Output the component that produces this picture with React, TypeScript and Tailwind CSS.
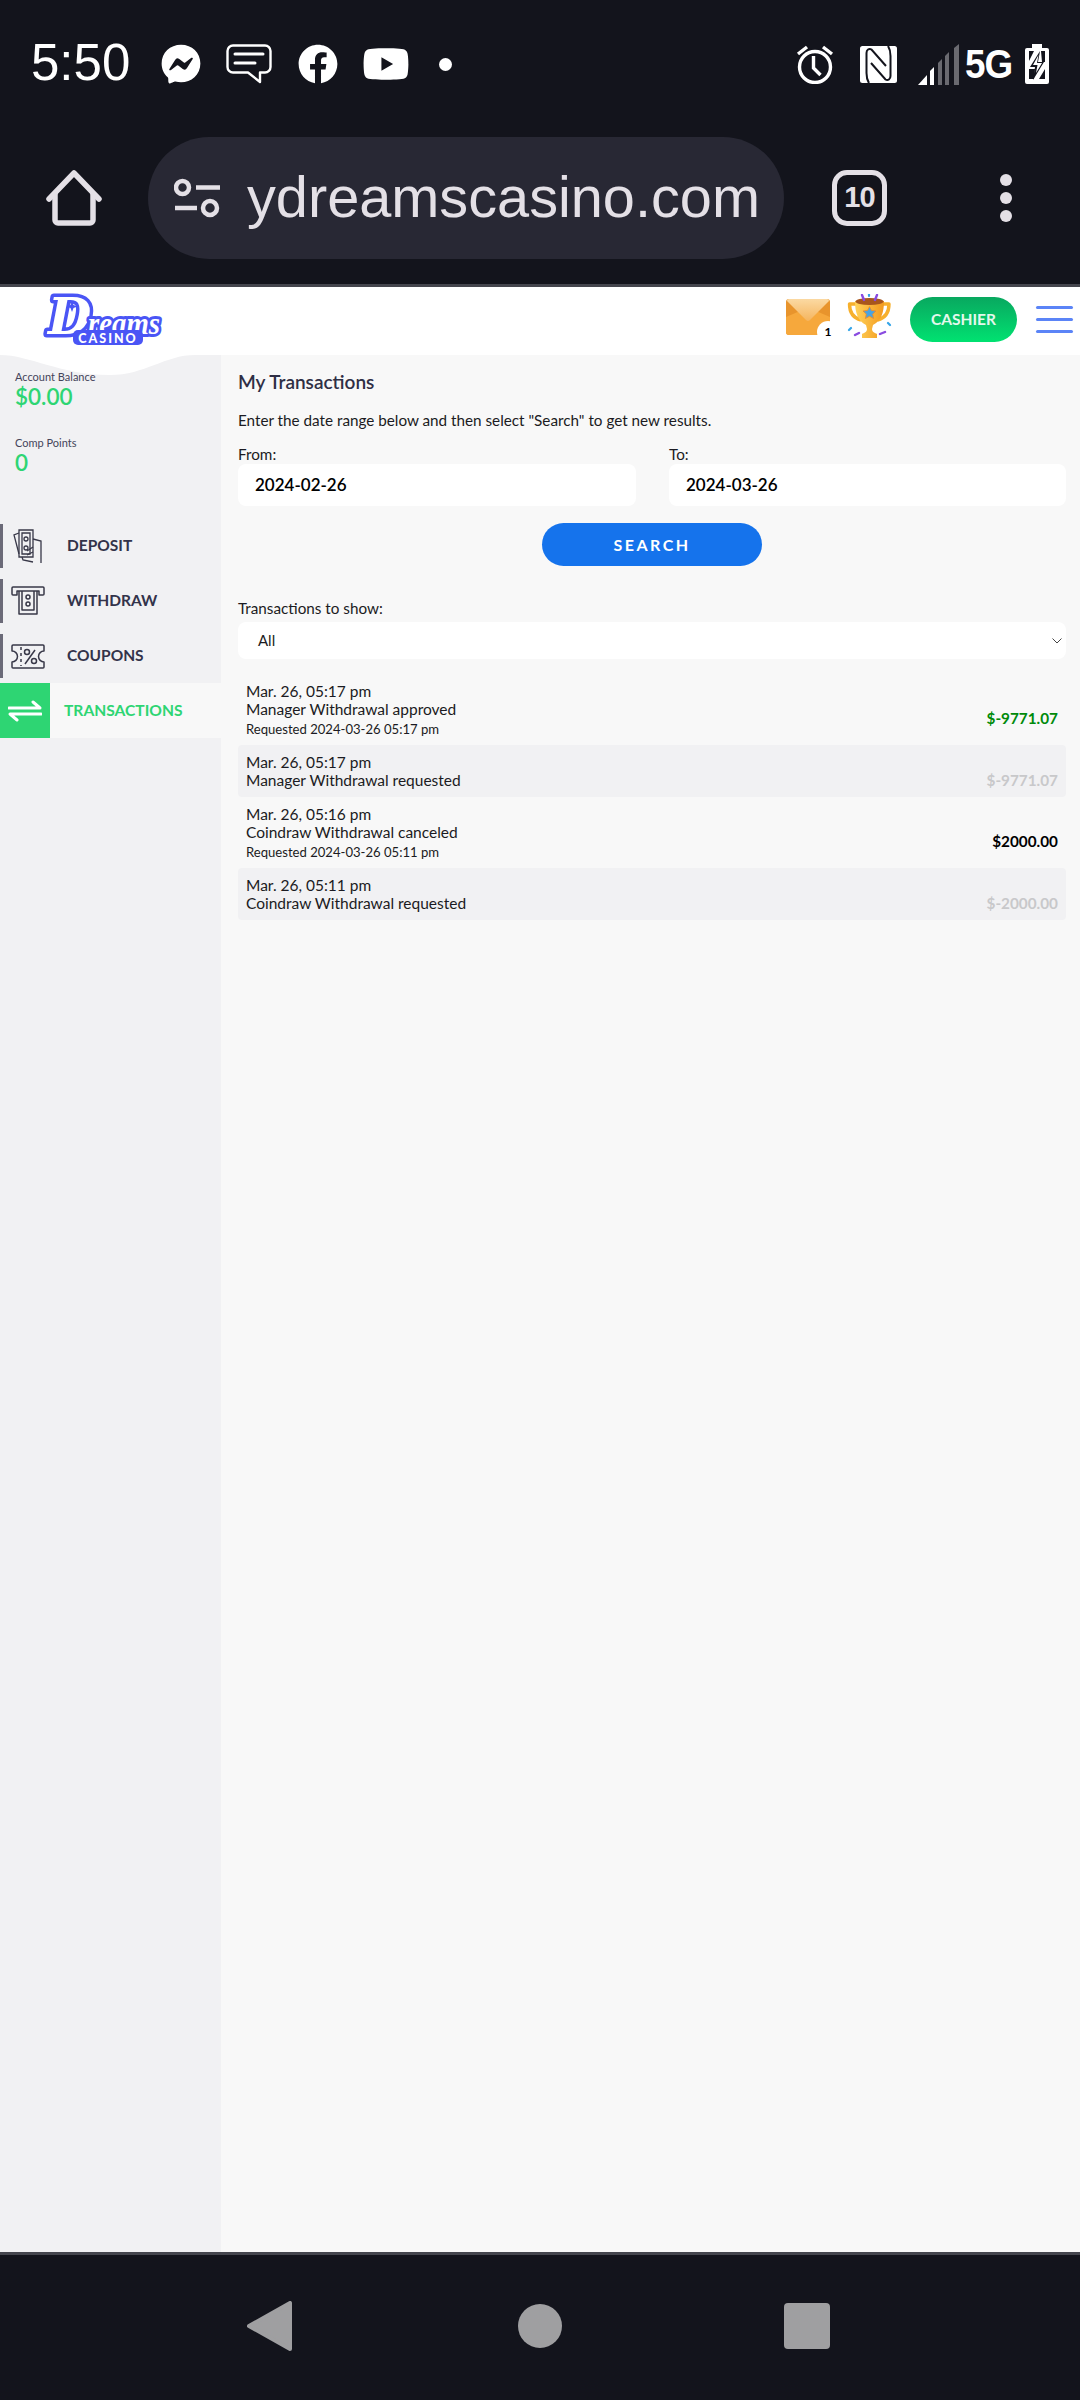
import { FaFacebook, FaFacebookMessenger, FaYoutube } from "react-icons/fa";

const rows = [
  { date: "Mar. 26, 05:17 pm", title: "Manager Withdrawal approved", note: "Requested 2024-03-26 05:17 pm", amount: "$-9771.07", color: "text-[#008a0a]", alt: false },
  { date: "Mar. 26, 05:17 pm", title: "Manager Withdrawal requested", amount: "$-9771.07", color: "text-[#c8c8ca]", alt: true },
  { date: "Mar. 26, 05:16 pm", title: "Coindraw Withdrawal canceled", note: "Requested 2024-03-26 05:11 pm", amount: "$2000.00", color: "text-black", alt: false },
  { date: "Mar. 26, 05:11 pm", title: "Coindraw Withdrawal requested", amount: "$-2000.00", color: "text-[#c8c8ca]", alt: true },
];

function ChatIcon() {
  return (
    <svg width="46" height="40" viewBox="0 0 46 40" fill="none" stroke="white" strokeWidth="2.4" strokeLinejoin="round" strokeLinecap="round">
      <path d="M7 1.500h32a5.500 5.500 0 0 1 5.500 5.500v16a5.500 5.500 0 0 1-5.500 5.500h-5v9.500l-12-9.500H7A5.500 5.500 0 0 1 1.500 23V7A5.500 5.500 0 0 1 7 1.500z" />
      <path d="M9 10h28M9 19h20" strokeWidth="3" />
    </svg>
  );
}

function AlarmIcon() {
  return (
    <svg width="38" height="40" viewBox="0 0 38 40" fill="none" stroke="white" strokeWidth="3.400">
      <circle cx="19" cy="23" r="15.500" />
      <path d="M17.500 12v12l7 7" />
      <path d="M2 10l9-7M36 10l-9-7" strokeWidth="3.400" />
    </svg>
  );
}

function NfcIcon() {
  return (
    <svg width="37" height="37" viewBox="0 0 37 37">
      <rect width="37" height="37" rx="2.500" fill="white" />
      <path d="M9 37C7 34 6.500 31 6.500 27V7c0-3 2.500-5 5-3.500L26 20" fill="none" stroke="#13141c" strokeWidth="2" />
      <path d="M28 0c2 3 2.500 6 2.500 10v20c0 3-2.500 5-5 3.500L11 17" fill="none" stroke="#13141c" strokeWidth="2" />
    </svg>
  );
}

function SignalIcon() {
  return (
    <svg width="41" height="41" viewBox="0 0 41 41">
      <path d="M0 41l9-10v10z" fill="white" />
      <path d="M12 27l4-4v18h-4z" fill="white" />
      <path d="M20 19l4-4v26h-4z" fill="#6a6a70" />
      <path d="M27 12l4-4v33h-4z" fill="#6a6a70" />
      <path d="M36 4l5-4v41h-5z" fill="#6a6a70" />
    </svg>
  );
}

function BatteryIcon() {
  return (
    <svg width="24" height="40" viewBox="0 0 24 40">
      <path d="M7 0h10v4h5a2 2 0 0 1 2 2v32a2 2 0 0 1-2 2H2a2 2 0 0 1-2-2V6a2 2 0 0 1 2-2h5z" fill="white" />
      <path d="M4 7h5L4 17zM20 7v11h-3l-1-11zM4 25v10h5l1-10zM20 25l-6 10h6z" fill="#13141c" />
      <path d="M15 7L5 23h5l-2 13 11-18h-6z" fill="#13141c" />
      <path d="M13.500 11L8 21h4.500l-1.500 8 6-10h-5z" fill="white" />
    </svg>
  );
}

function HomeIcon() {
  return (
    <svg width="56" height="56" viewBox="0 0 56 56" fill="none" stroke="#e4e0e6" strokeWidth="5.500" strokeLinejoin="round" strokeLinecap="round">
      <path d="M3 29L28 3l25 26" />
      <path d="M9 24v26a3 3 0 0 0 3 3h32a3 3 0 0 0 3-3V24" />
    </svg>
  );
}

function TuneIcon() {
  return (
    <svg width="46" height="40" viewBox="0 0 46 40" fill="none" stroke="#e4e0e6" strokeWidth="4.500">
      <circle cx="8.500" cy="9.500" r="6.500" />
      <circle cx="36" cy="30" r="7" />
      <path d="M22 9.500h24M1 30h22" />
    </svg>
  );
}

function Envelope() {
  return (
    <svg width="44" height="36" viewBox="0 0 44 36">
      <defs>
        <linearGradient id="envFlap" x1="0" y1="0" x2="0" y2="1">
          <stop offset="0" stopColor="#fbd9a2" />
          <stop offset="1" stopColor="#f5b55f" />
        </linearGradient>
      </defs>
      <rect width="44" height="36" rx="3" fill="#e8942c" />
      <path d="M0 33V18l14-6 8 7 8-7 14 6v15a3 3 0 0 1-3 3H3a3 3 0 0 1-3-3z" fill="#f6a83c" />
      <path d="M1 2a2 2 0 0 1 2-2h38a2 2 0 0 1 2 2L24 21a3 3 0 0 1-4 0z" fill="url(#envFlap)" />
    </svg>
  );
}

function Trophy() {
  return (
    <svg width="46" height="46" viewBox="0 0 46 46">
      <defs>
        <linearGradient id="cup" x1="0" y1="0" x2="1" y2="0">
          <stop offset="0" stopColor="#ffd25a" />
          <stop offset="1" stopColor="#f39a1e" />
        </linearGradient>
      </defs>
      <path d="M11 10H2.500c0 8 3.500 14 11.500 16M33 10h9c0 8-3.500 14-11.500 16" fill="none" stroke="#f7b02c" strokeWidth="3.400" strokeLinejoin="round" />
      <path d="M8 7h29c0 12-3 20-11 24l-1 4c0 3 3 4 5 5v4H15v-4c2-1 5-2 5-5l-1-4C11 27 8 19 8 7z" fill="url(#cup)" />
      <ellipse cx="22.500" cy="7.500" rx="14" ry="3.500" fill="#a8561c" />
      <path d="M22.500 12.500l2 4 4.500.5-3.300 3 .9 4.500-4.100-2.200-4.100 2.200.9-4.500-3.300-3 4.500-.5z" fill="#4aa3df" stroke="#f08a24" strokeWidth=".8" />
      <path d="M15 1l2 5M30 1l-2 5M8 41l4-2M33 40l5-2" stroke="#8a4be0" strokeWidth="2.400" strokeLinecap="round" />
      <path d="M22 0v2M2 36l2-2M41 29l2 2" stroke="#35a5e8" strokeWidth="2.200" strokeLinecap="round" />
    </svg>
  );
}

function DepositIcon() {
  return (
    <svg width="30" height="35" viewBox="0 0 30 35" fill="none" stroke="#383848" strokeWidth="1.300">
      <path d="M6 1h14v27H6z" />
      <path d="M9 4h8v21H9z" />
      <circle cx="13" cy="10" r="2" />
      <circle cx="13" cy="19" r="2" />
      <path d="M20 10l8 2v22M6 4L1 6l5 19M9 28l1 3 10 2" />
      <path d="M20 18l-6 4M20 23l-6 3" />
    </svg>
  );
}

function WithdrawIcon() {
  return (
    <svg width="34" height="30" viewBox="0 0 34 30" fill="none" stroke="#383848" strokeWidth="1.500" strokeLinejoin="round">
      <path d="M2 1h30a1 1 0 0 1 1 1v6a1 1 0 0 1-1 1h-4V5H6v4H2a1 1 0 0 1-1-1V2a1 1 0 0 1 1-1z" />
      <path d="M8 5v23h18V5" />
      <path d="M11 5v19h12V5" />
      <circle cx="17" cy="11" r="2" />
      <circle cx="17" cy="18" r="2" />
    </svg>
  );
}

function CouponIcon() {
  return (
    <svg width="34" height="25" viewBox="0 0 34 25" fill="none" stroke="#383848" strokeWidth="1.500" strokeLinejoin="round">
      <path d="M2 1h30a1 1 0 0 1 1 1v5a5.500 5.500 0 0 0 0 11v5a1 1 0 0 1-1 1H2a1 1 0 0 1-1-1v-5a5.500 5.500 0 0 0 0-11V2a1 1 0 0 1 1-1z" />
      <path d="M10 3v19" strokeDasharray="3 3" />
      <path d="M24 6L14 20" />
      <circle cx="16" cy="8" r="2.500" />
      <circle cx="23" cy="17" r="2.500" />
    </svg>
  );
}

function NavItem({ label, children }: { label: string; children: React.ReactNode }) {
  return (
    <div className="flex h-11 items-center border-l-[3px] border-[#6b6a78]">
      <div className="mr-[14px] flex w-[50px] justify-center">{children}</div>
      <span className="text-[15.500px] font-bold text-[#33334a]">{label}</span>
    </div>
  );
}

function Logo() {
  return (
    <svg width="124" height="68" viewBox="0 0 124 68" className="ml-[42px]">
      <text x="6" y="47" fontFamily="'DejaVu Serif', serif" fontStyle="italic" fontWeight="700" fontSize="50" fill="white" stroke="#4a55f5" strokeWidth="7" paintOrder="stroke" strokeLinejoin="round">D</text>
      <path d="M30 14l1.500 4 4 1.500-4 1.500-1.500 4-1.500-4-4-1.500 4-1.500z" fill="#4a55f5" />
      <text x="46" y="47" fontFamily="'Liberation Serif', serif" fontStyle="italic" fontWeight="700" fontSize="31" textLength="72" lengthAdjust="spacingAndGlyphs" fill="white" stroke="#4a55f5" strokeWidth="6" paintOrder="stroke" strokeLinejoin="round">reams</text>
      <rect x="31" y="43" width="70" height="15" rx="5" fill="#4a55f5" />
      <text x="66" y="55.500" textAnchor="middle" fontFamily="Lato, sans-serif" fontWeight="900" fontSize="12.500" letterSpacing="2" fill="white">CASINO</text>
    </svg>
  );
}

export default function App() {
  return (
    <div className="flex h-[2400px] w-[1080px] flex-col overflow-hidden bg-[#13141c] font-['Lato',sans-serif]">
      {/* phone status bar + browser bar */}
      <div className="h-[284px] shrink-0 font-['Liberation_Sans',sans-serif]">
        <div className="flex h-[137px] items-start px-[31px] pt-[44px]">
          <span className="mr-[32px] w-[98px] text-[51px] leading-[38px] text-white">5:50</span>
          <div className="flex h-10 items-center">
            <FaFacebookMessenger className="h-10 w-10 text-white" />
            <span className="ml-[25px] flex"><ChatIcon /></span>
            <FaFacebook className="ml-[26px] h-10 w-10 text-white" />
            <FaYoutube className="ml-[24px] h-[42px] w-[48px] text-white" />
            <span className="ml-[29px] h-[13px] w-[13px] rounded-full bg-white" />
          </div>
          <div className="ml-auto flex h-10 items-center">
            <AlarmIcon />
            <span className="ml-[26px] flex"><NfcIcon /></span>
            <span className="ml-[21px] flex"><SignalIcon /></span>
            <span className="ml-[6px] w-[47px] origin-left text-[40px] font-bold leading-10 tracking-[-1px] text-white [transform:scaleX(0.92)]">5G</span>
            <span className="ml-[13px] flex"><BatteryIcon /></span>
          </div>
        </div>
        <div className="flex h-[122px] items-center pl-[46px]">
          <HomeIcon />
          <div className="ml-[46px] flex h-[122px] w-[636px] items-center rounded-full bg-[#282834] pl-[26px]">
            <TuneIcon />
            <span className="ml-[27px] text-[57.700px] leading-none text-[#e4e0e6]">ydreamscasino.com</span>
          </div>
          <div className="ml-[48px] flex h-[56px] w-[55px] items-center justify-center rounded-[15px] border-[5px] border-[#e4e0e6] text-[29px] font-bold tracking-[-1px] text-[#e4e0e6]">10</div>
          <div className="ml-[113px] flex flex-col gap-[6px]">
            <span className="h-3 w-3 rounded-full bg-[#e4e0e6]" />
            <span className="h-3 w-3 rounded-full bg-[#e4e0e6]" />
            <span className="h-3 w-3 rounded-full bg-[#e4e0e6]" />
          </div>
        </div>
      </div>

      <div className="h-[3px] shrink-0 bg-[#44454d]" />

      {/* site header */}
      <header className="flex h-[68px] shrink-0 items-start bg-white">
        <Logo />
        <div className="relative ml-auto mt-[12px] flex">
          <Envelope />
          <span className="absolute -bottom-[8px] -right-[9px] flex h-[22px] w-[22px] items-center justify-center rounded-full bg-white text-[12px] font-bold leading-none text-black">1</span>
        </div>
        <span className="ml-[17px] mt-[7px] flex"><Trophy /></span>
        <div className="ml-[17px] mt-[10px] flex h-[45px] w-[107px] items-center justify-center rounded-full bg-gradient-to-b from-[#08a85f] to-[#00e271] text-[15.500px] font-bold text-[#e4f8ec]">CASHIER</div>
        <div className="ml-[19px] mr-[7px] mt-[19px] flex w-[37px] flex-col gap-[9px]">
          <span className="h-[3px] rounded-full bg-[#5b84f7]" />
          <span className="h-[3px] rounded-full bg-[#5b84f7]" />
          <span className="h-[3px] rounded-full bg-[#5b84f7]" />
        </div>
      </header>

      <div className="flex min-h-0 flex-1">
        {/* sidebar */}
        <aside className="relative flex w-[221px] shrink-0 flex-col bg-[#f1f1f3]">
          <svg width="221" height="22" viewBox="0 0 221 22" className="absolute left-0 top-0">
            <path d="M0 0c30 0 60 20 110 20 35 0 55-20 85-20z" fill="white" />
          </svg>
          <div className="relative pl-[15px] pt-[15px]">
            <div className="text-[11px] leading-[14px] text-[#44445a]">Account Balance</div>
            <div className="text-[22.500px] font-semibold leading-[25px] text-[#2ed573]">$0.00</div>
            <div className="mt-[27px] text-[11px] leading-[14px] text-[#44445a]">Comp Points</div>
            <div className="text-[22.500px] font-semibold leading-[25px] text-[#2ed573]">0</div>
          </div>
          <div className="mt-[49px] flex flex-col gap-[11px]">
            <NavItem label="DEPOSIT"><DepositIcon /></NavItem>
            <NavItem label="WITHDRAW"><WithdrawIcon /></NavItem>
            <NavItem label="COUPONS"><CouponIcon /></NavItem>
          </div>
          <div className="mt-[5px] flex h-[55px] items-center bg-[#f8f8f8]">
            <div className="flex h-full w-[50px] items-center justify-center bg-[#2ed573]">
              <svg width="34" height="22" viewBox="0 0 34 22" fill="none" stroke="white" strokeWidth="3" strokeLinecap="round" strokeLinejoin="round">
                <path d="M1 8h31l-7-6M33 14H2l7 6" />
              </svg>
            </div>
            <span className="ml-[14px] text-[15.600px] font-bold text-[#2ed573]">TRANSACTIONS</span>
          </div>
        </aside>

        {/* main content */}
        <main className="flex-1 bg-[#f8f8f8] pl-[17px] pr-[14px] pt-[16px] text-[#1b1b22]">
          <h1 className="text-[19px] font-semibold leading-[22px] text-[#2f2f45]">My Transactions</h1>
          <p className="mt-[17px] text-[15.250px] leading-[20px]">Enter the date range below and then select "Search" to get new results.</p>
          <div className="mt-[14px] flex gap-[33px]">
            <label className="w-[398px]">
              <span className="block text-[15.250px] leading-[20px]">From:</span>
              <span className="block h-[42px] rounded-lg bg-white pl-[17px] text-[17px] font-semibold leading-[42px] text-black">2024-02-26</span>
            </label>
            <label className="flex-1">
              <span className="block text-[15.250px] leading-[20px]">To:</span>
              <span className="block h-[42px] rounded-lg bg-white pl-[17px] text-[17px] font-semibold leading-[42px] text-black">2024-03-26</span>
            </label>
          </div>
          <div className="mt-[17px] flex justify-center">
            <div className="flex h-[43px] w-[220px] items-center justify-center rounded-full bg-[#1573ec] text-[16px] font-bold tracking-[2.500px] text-white">SEARCH</div>
          </div>
          <div className="mt-[32px] text-[15.250px] leading-[20px]">Transactions to show:</div>
          <div className="mt-[4px] flex h-[37px] items-center justify-between rounded-lg bg-white pl-[20px] pr-[4px] text-[15px]">
            <span>All</span>
            <svg width="10" height="6" viewBox="0 0 10 6" fill="none" stroke="#444" strokeWidth="1"><path d="M.5.500 5 5 9.500.500" /></svg>
          </div>
          <div className="mt-[15px]">
            {rows.map((r, i) => (
              <div key={i} className={`flex items-center justify-between rounded px-[8px] ${r.alt ? "bg-[#f1f1f3]" : ""}`}>
                <div className={`pt-[8px] leading-[18px] ${r.note ? "pb-[7px]" : "pb-[8px]"}`}>
                  <div className="text-[15.500px]">{r.date}</div>
                  <div className="text-[15.500px]">{r.title}</div>
                  {r.note && <div className="mt-[2px] text-[13.100px]">{r.note}</div>}
                </div>
                <div className={`pt-[18px] text-[15.300px] font-bold ${r.color}`}>{r.amount}</div>
              </div>
            ))}
          </div>
        </main>
      </div>

      <div className="h-[3px] shrink-0 bg-[#44454d]" />

      {/* android nav bar */}
      <div className="flex h-[145px] shrink-0 items-start pl-[247px] pt-[46px]">
        <svg width="45" height="50" viewBox="0 0 45 50" fill="#9f9fa1" stroke="#9f9fa1" strokeWidth="4" strokeLinejoin="round"><path d="M2 25 43 2v46z" /></svg>
        <span className="ml-[226px] mt-[3px] h-[44px] w-[44px] rounded-full bg-[#9f9fa1]" />
        <span className="ml-[222px] mt-[2px] h-[46px] w-[46px] rounded bg-[#9f9fa1]" />
      </div>
    </div>
  );
}
